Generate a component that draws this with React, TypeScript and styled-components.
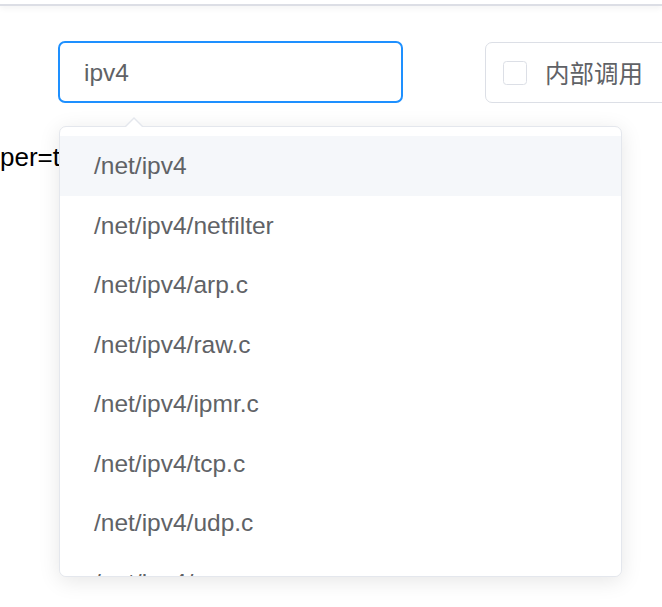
import React from "react";
import styled, { createGlobalStyle } from "styled-components";

const Global = createGlobalStyle`
  html { overflow: hidden; }
  html, body { margin: 0; padding: 0; background: #fff; }
  body {
    min-height: 100vh;
    font-family: "Liberation Sans", "Noto Sans CJK SC", Arial, sans-serif;
  }
  * { box-sizing: border-box; }
`;

const Page = styled.div`
  width: 662px;
  height: 607px;
  overflow: hidden;
  position: relative;
`;

const Header = styled.div`
  height: 6px;
  background: #fff;
  border-bottom: 2px solid #dcdee5;
  box-shadow: 0 2px 6px rgba(0, 0, 0, 0.06);
`;

const FormRow = styled.div`
  display: flex;
  align-items: flex-start;
  gap: 82px;
  margin-top: 35px;
  padding-left: 58px;
  width: 900px;
`;

const InputWrap = styled.div`
  position: relative;
  width: 345px;
  height: 62px;
`;

const Input = styled.div`
  height: 62px;
  border: 2px solid #1e90ff;
  border-radius: 7px;
  padding: 2px 24px 0;
  display: flex;
  align-items: center;
  font-size: 24.5px;
  color: #606266;
`;

const CheckBoxBordered = styled.label`
  display: flex;
  align-items: center;
  width: 260px;
  height: 61px;
  margin-top: 1px;
  border: 1.5px solid #dcdfe6;
  border-radius: 7px;
  padding-left: 17px;
  font-size: 24.5px;
  color: #606266;
  font-family: "Noto Sans CJK SC", sans-serif;
`;

const Square = styled.span`
  width: 24px;
  height: 24px;
  border: 1.5px solid #dcdfe6;
  border-radius: 3.5px;
  background: #fff;
  margin-right: 18px;
`;

const BackLine = styled.div`
  margin-top: 39px;
  font-size: 26px;
  color: #000;
  line-height: 30px;
  white-space: nowrap;
`;

const Popper = styled.div`
  position: absolute;
  left: 1px;
  top: 85px;
  width: 563px;
  height: 451px;
  background: #fff;
  border: 1.5px solid #e4e7ed;
  border-radius: 7px;
  box-shadow: 0 4px 21px rgba(0, 0, 0, 0.1);
  z-index: 10;
`;

const Arrow = styled.div`
  position: absolute;
  top: -10px;
  left: 64px;
  width: 0;
  height: 0;
  border-left: 10px solid transparent;
  border-right: 10px solid transparent;
  border-bottom: 10px solid #e4e7ed;
  &::after {
    content: "";
    position: absolute;
    left: -8.5px;
    top: 1.6px;
    border-left: 8.5px solid transparent;
    border-right: 8.5px solid transparent;
    border-bottom: 8.5px solid #fff;
  }
`;

const List = styled.ul`
  list-style: none;
  margin: 0;
  padding: 9px 0 0;
  height: 100%;
  overflow: hidden;
  border-radius: 7px;
`;

const Item = styled.li<{ $active?: boolean }>`
  height: 59.5px;
  line-height: 59.5px;
  padding: 0 34px;
  font-size: 24.5px;
  color: #606266;
  white-space: nowrap;
  background: ${(p) => (p.$active ? "#f5f7fa" : "#fff")};
`;

const items = [
  "/net/ipv4",
  "/net/ipv4/netfilter",
  "/net/ipv4/arp.c",
  "/net/ipv4/raw.c",
  "/net/ipv4/ipmr.c",
  "/net/ipv4/tcp.c",
  "/net/ipv4/udp.c",
  "/net/ipv4/proc.c",
];

export default function App() {
  return (
    <Page>
      <Global />
      <Header />
      <FormRow>
        <InputWrap>
          <Input>ipv4</Input>
          <Popper>
            <Arrow />
            <List>
              {items.map((t, i) => (
                <Item key={t} $active={i === 0}>
                  {t}
                </Item>
              ))}
            </List>
          </Popper>
        </InputWrap>
        <CheckBoxBordered>
          <Square />
          内部调用
        </CheckBoxBordered>
      </FormRow>
      <BackLine>per=true</BackLine>
    </Page>
  );
}
